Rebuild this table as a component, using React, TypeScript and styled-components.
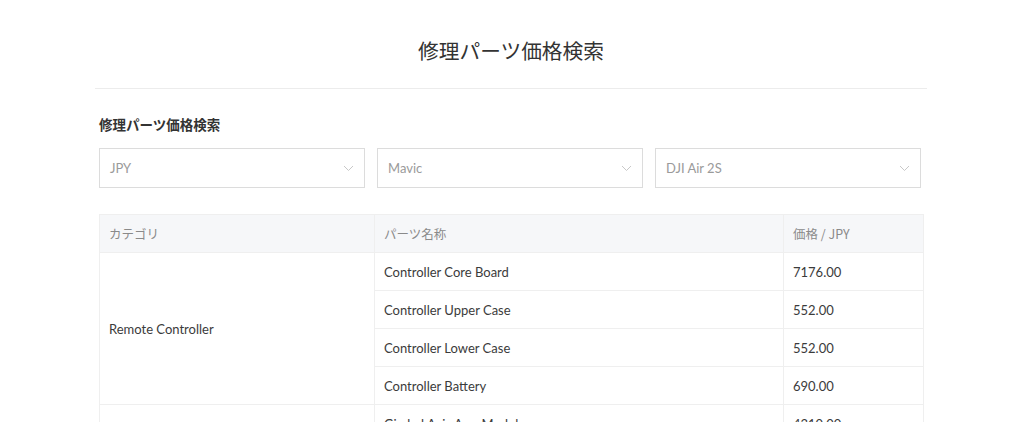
import React from "react";
import styled, { createGlobalStyle } from "styled-components";

const Global = createGlobalStyle`
  body { margin: 0; background: #fff; font-family: Lato, "Noto Sans CJK JP", sans-serif; color: #3b3b3b; }
`;

const Page = styled.div`
  width: 826px;
  margin: 0 auto;
`;

const Title = styled.h1`
  margin: 0 -2px 0 -4px;
  padding: 36px 0 24px;
  border-bottom: 1px solid #ececec;
  text-align: center;
  font-size: 20.7px;
  font-weight: 400;
  line-height: 28px;
  color: #333;
  font-family: "Noto Sans CJK JP", sans-serif;
`;

const Heading = styled.h2`
  margin: 25px 0 0;
  font-size: 13.5px;
  font-weight: 700;
  line-height: 20px;
  color: #333;
  font-family: "Noto Sans CJK JP", sans-serif;
`;

const Selects = styled.div`
  display: flex;
  gap: 12px;
  margin-top: 14px;
  width: 822px;
`;

const Select = styled.div`
  flex: 1;
  height: 40px;
  box-sizing: border-box;
  border: 1px solid #dcdcdc;
  display: flex;
  align-items: center;
  justify-content: space-between;
  padding: 0 10px;
  font-size: 13px;
  color: #9a9a9a;
`;

const Chevron = () => (
  <svg width="11" height="7" viewBox="0 0 11 7">
    <path d="M1 1l4.5 4.5L10 1" fill="none" stroke="#c8c8c8" strokeWidth="1" />
  </svg>
);

const Table = styled.table`
  margin-top: 26px;
  width: 824px;
  border-collapse: collapse;
  table-layout: fixed;
  font-size: 13px;
`;

const Col = styled.col<{ $w: number }>`
  width: ${(p) => p.$w}px;
`;

const Th = styled.th`
  height: 37px;
  background: #f6f7f9;
  border: 1px solid #efefef;
  text-align: left;
  padding: 0 9px;
  font-weight: 400;
  color: #8a8a8a;
  font-family: "Noto Sans CJK JP", Lato, sans-serif;
  font-size: 12.5px;
`;

const Td = styled.td`
  height: 37px;
  border: 1px solid #efefef;
  padding: 0 9px;
  color: #3b3b3b;
`;

const rows: [string, string][] = [
  ["Controller Core Board", "7176.00"],
  ["Controller Upper Case", "552.00"],
  ["Controller Lower Case", "552.00"],
  ["Controller Battery", "690.00"],
];

export default function App() {
  return (
    <>
      <Global />
      <Page>
        <Title>修理パーツ価格検索</Title>
        <Heading>修理パーツ価格検索</Heading>
        <Selects>
          <Select>JPY<Chevron /></Select>
          <Select>Mavic<Chevron /></Select>
          <Select>DJI Air 2S<Chevron /></Select>
        </Selects>
        <Table>
          <colgroup>
            <Col $w={275} />
            <Col $w={409} />
            <Col $w={140} />
          </colgroup>
          <thead>
            <tr>
              <Th>カテゴリ</Th>
              <Th>パーツ名称</Th>
              <Th>価格 / JPY</Th>
            </tr>
          </thead>
          <tbody>
            {rows.map((r, i) => (
              <tr key={i}>
                {i === 0 && <Td rowSpan={4}>Remote Controller</Td>}
                <Td>{r[0]}</Td>
                <Td>{r[1]}</Td>
              </tr>
            ))}
            <tr>
              <Td rowSpan={3}>Gimbal</Td>
              <Td>Gimbal Axis Arm Module</Td>
              <Td>4310.00</Td>
            </tr>
            <tr>
              <Td>Gimbal Camera</Td>
              <Td>9000.00</Td>
            </tr>
          </tbody>
        </Table>
      </Page>
    </>
  );
}
